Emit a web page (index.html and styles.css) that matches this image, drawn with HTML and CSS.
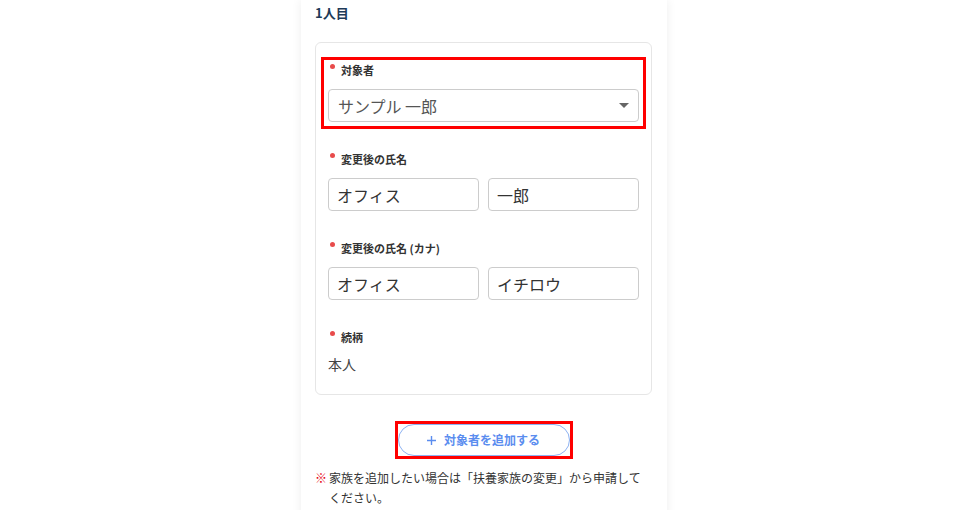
FILE: index.html
```html
<!DOCTYPE html>
<html lang="ja">
<head>
    <meta charset="UTF-8">
    <meta name="viewport" content="width=device-width, initial-scale=1.0">
    <title>扶養家族 - 1人目</title>
    <link rel="stylesheet" href="styles.css">
</head>
<body>
    <div class="page">
        <h2 class="person-title">1人目</h2>

        <div class="card">
            <div class="field highlight">
                <div class="field-label">対象者</div>
                <div class="select">
                    <span>サンプル 一郎</span>
                    <svg class="select-arrow" width="10" height="5" viewBox="0 0 10 5"><path d="M0 0H10L5 5Z" fill="#666"/></svg>
                </div>
            </div>

            <div class="field">
                <div class="field-label">変更後の氏名</div>
                <div class="input-pair">
                    <input type="text" value="オフィス">
                    <input type="text" value="一郎">
                </div>
            </div>

            <div class="field">
                <div class="field-label">変更後の氏名 (カナ)</div>
                <div class="input-pair">
                    <input type="text" value="オフィス">
                    <input type="text" value="イチロウ">
                </div>
            </div>

            <div class="field">
                <div class="field-label">続柄</div>
                <div class="field-value">本人</div>
            </div>
        </div>

        <div class="add-row">
            <span class="highlight-box">
                <button class="add-btn">
                    <svg width="9" height="9" viewBox="0 0 9 9"><path d="M4.5 0V9M0 4.5H9" stroke="#5b8def" stroke-width="1.4"/></svg>
                    対象者を追加する
                </button>
            </span>
        </div>

        <p class="note">
            <span class="note-mark">※</span>
            <span class="note-text">家族を追加したい場合は「扶養家族の変更」から申請してください。</span>
        </p>
    </div>
</body>
</html>
```

FILE: styles.css
```css
body {
    margin: 0;
    background-color: #fff;
    font-family: "Noto Sans CJK JP", "Noto Sans", sans-serif;
    color: #333;
}

.page {
    width: 337px;
    min-height: 100vh;
    margin-left: 301px;
    padding: 4px 15px 20px 14px;
    background-color: #fff;
    box-shadow: 0 0 10px rgba(0, 0, 0, 0.07);
}

.person-title {
    margin: 0 0 20px;
    font-size: 13px;
    line-height: 18px;
    font-weight: bold;
    color: #1e3a58;
}

.card {
    border: 1px solid #e6e6e6;
    border-radius: 6px;
    padding: 21px 12px 20px;
}

.field + .field {
    margin-top: 31px;
}

.highlight {
    outline: 3px solid #f00;
    outline-offset: 4px;
}

.field-label {
    display: flex;
    align-items: flex-start;
    height: 12px;
    font-size: 11px;
    line-height: 12px;
    font-weight: bold;
    color: #333;
    margin-bottom: 13px;
}

.field-label::before {
    content: "";
    width: 5px;
    height: 5px;
    border-radius: 50%;
    background-color: #e84b4b;
    margin: 0 6px 0 2px;
}

.select {
    display: flex;
    align-items: center;
    justify-content: space-between;
    height: 33px;
    box-sizing: border-box;
    border: 1px solid #ccc;
    border-radius: 4px;
    padding: 0 9px;
    font-size: 16px;
    color: #555;
}

.input-pair {
    display: grid;
    grid-template-columns: 1fr 1fr;
    gap: 9px;
}

.input-pair input {
    width: 100%;
    height: 33px;
    box-sizing: border-box;
    border: 1px solid #ccc;
    border-radius: 4px;
    padding: 0 8px;
    font-family: inherit;
    font-size: 16px;
    color: #333;
    background-color: #fff;
}

.field-value {
    margin-top: -2px;
    font-size: 14px;
    line-height: 20px;
    color: #444;
}

.add-row {
    margin-top: 29px;
    text-align: center;
}

.highlight-box {
    display: inline-block;
    line-height: 0;
    vertical-align: top;
    outline: 3px solid #f00;
}

.add-btn {
    display: inline-flex;
    align-items: center;
    justify-content: center;
    gap: 8px;
    width: 172px;
    height: 32px;
    margin: 0;
    border: 1px solid #8db2f2;
    border-radius: 16px;
    background-color: #fff;
    color: #5b8def;
    font-family: inherit;
    font-size: 12px;
    line-height: 16px;
    font-weight: bold;
    cursor: pointer;
}

.note {
    display: flex;
    margin: 12px 0 0;
    font-size: 12px;
    line-height: 20px;
    color: #333;
}

.note-mark {
    color: #e60012;
    font-weight: bold;
    margin-right: 2px;
}

.note-text {
    flex: 1;
}
```
